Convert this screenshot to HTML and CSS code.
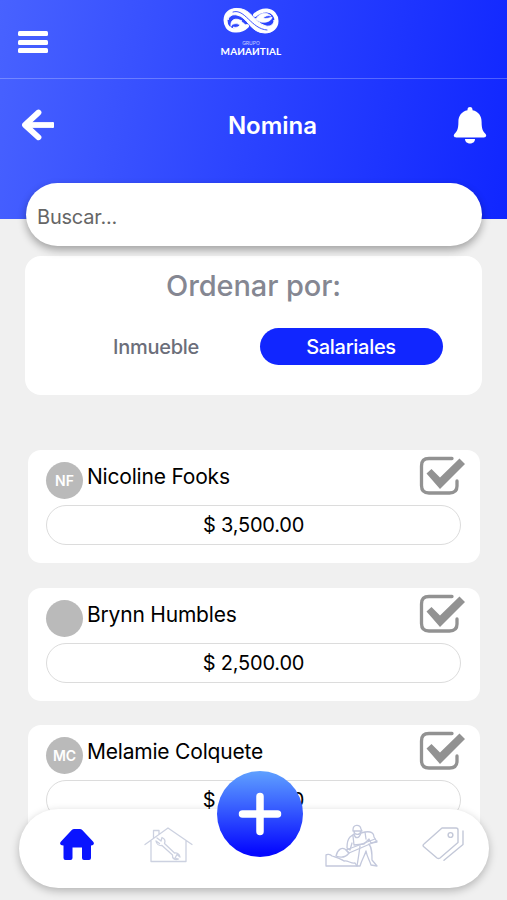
FILE: index.html
```
<!DOCTYPE html>
<html lang="es">
<head>
    <meta charset="UTF-8">
    <meta name="viewport" content="width=device-width, initial-scale=1.0">
    <title>Nomina</title>
    <link rel="stylesheet" href="styles.css">
</head>
<body>
    <header class="header">
      <div class="topbar">
        <button class="menu" aria-label="Menu"><span></span><span></span><span></span></button>
        <div class="logo">
          <svg width="56" height="28" viewBox="0 0 56 28" fill="none" stroke="#fff" stroke-linecap="round">
            <path stroke-width="4" d="M24 19C20 23 17 24 12 23.500C5 23 2.500 18 2.500 13C2.500 7 7 3 14 3M32 8C36 4.500 39 3 44 3.500C50 4 53.500 9 53.500 14C53.500 20 49 24 43 24"/>
            <path fill="#fff" stroke-width="1" d="M13 1.500C28 0 31 16 43 19C48 20 51 17 51 13C55 20 50 26 42 26C27 26 25 10 14 8C9 7 6 9 5 13C3 7 7 2 13 1.500Z"/>
            <path fill="#fff" stroke-width="0.800" d="M8 19C7 13 12 10 19 14C16 14 22 16 23 19C19 23 13 24 10 20C13 21 16 20 17 18C14 16 10 16 8 19ZM33 12C36 6 43 4 48 9C45 8 42 9 40 11C43 12 47 11 49 10C49 15 38 18 33 12Z"/>
            <path stroke="#2b43ff" stroke-width="0.900" d="M10 5C22 1 28 22 44 23"/>
          </svg>
          <span class="logo-small">GRUPO</span>
          <span class="logo-name">MAИAИTIAL</span>
        </div>
      </div>
      <div class="titlebar">
        <svg class="back" width="34" height="34" viewBox="0 0 34 34" fill="none" stroke="#fff" stroke-width="5.800" stroke-linejoin="round" stroke-linecap="round">
          <path d="M17.500 4.500L4 17L17.500 29.300"/>
          <path stroke-linecap="butt" d="M6 17H32"/>
          <path stroke-width="2" d="M32 15.100V18.900"/>
        </svg>
        <h1>Nomina</h1>
        <svg class="bell" width="34" height="38" viewBox="0 0 34 38" fill="#fff">
          <path d="M14.500 3.500C14.500 0.200 19.500 0.200 19.500 3.500V4.300C25.500 5.500 28.600 10 28.600 16C28.600 23 30 25.500 32.600 28C34 30 32.700 31.400 31 31.400H3C1.300 31.400 0 30 1.400 28C4 25.500 5.400 23 5.400 16C5.400 10 8.500 5.500 14.500 4.300Z"/>
          <path d="M12 33H22C22 39 12 39 12 33Z"/>
        </svg>
      </div>
    </header>

    <main>
      <input class="search" type="text" placeholder="Buscar...">
      <section class="sort">
        <h2>Ordenar por:</h2>
        <div class="options">
          <button class="option">Inmueble</button>
          <button class="option active">Salariales</button>
        </div>
      </section>

      <section class="list">
        <article class="card">
          <div class="person">
            <span class="avatar">NF</span>
            <span class="name">Nicoline Fooks</span>
            <svg class="check" width="46" height="40" viewBox="0 0 46 40"><use href="#check"/></svg>
          </div>
          <div class="amount">$ 3,500.00</div>
        </article>
        <article class="card">
          <div class="person">
            <span class="avatar"></span>
            <span class="name">Brynn Humbles</span>
            <svg class="check" width="46" height="40" viewBox="0 0 46 40"><use href="#check"/></svg>
          </div>
          <div class="amount">$ 2,500.00</div>
        </article>
        <article class="card">
          <div class="person">
            <span class="avatar">MC</span>
            <span class="name">Melamie Colquete</span>
            <svg class="check" width="46" height="40" viewBox="0 0 46 40"><use href="#check"/></svg>
          </div>
          <div class="amount">$ 2,500.00</div>
        </article>
      </section>
    </main>

    <nav class="nav">
      <svg class="home" width="34" height="31" viewBox="0 0 34 31" fill="#0a14ff">
        <path d="M12 0.800Q13 0 14 0H20Q21 0 22 0.800L33 12.500Q34.500 14 33.500 15.500Q32.500 16.500 31 16.500V29Q31 31 29 31H24Q22 31 22 29V18.500H12.500V29Q12.500 31 10.500 31H5.500Q3.500 31 3.500 29V16.500Q1.500 16.500 0.500 15.500Q-0.500 14 1 12.500Z"/>
      </svg>
      <svg class="repair" width="49" height="36" viewBox="0 0 49 36" fill="none" stroke="#ccd1e0" stroke-width="1.300" stroke-linecap="round" stroke-linejoin="round">
        <path d="M1 17.500L24 1L48 17.500M7 14V34.500H42V14M9.500 11V3.500H15V7"/>
        <path d="M13 11L17 14L18 10.500C21.500 12 21.500 14 20.500 16.500L30.500 26C33 25.500 35.500 27 36 30L33 27.500L31 31L34.500 32C31 33.500 28 31.500 28.500 28L18 18.500C15 19 12.500 17 12 14L15.500 16.500"/>
      </svg>
      <button class="add" aria-label="Agregar">
        <svg width="44" height="44" viewBox="0 0 44 44" stroke="#fff" stroke-width="7.500" stroke-linecap="round">
          <path d="M22 4.500V39.500M4.500 22H39.500"/>
        </svg>
      </button>
      <svg class="worker" width="54" height="44" viewBox="0 0 54 44" fill="none" stroke="#c3c8dc" stroke-width="1.300" stroke-linecap="round" stroke-linejoin="round">
        <path d="M28 6C28 0 35 0 36 5L37 7H28ZM29 7C29 11 35 12 36 7"/>
        <path d="M29 10L25 13C22 16 22 20 22 24L25 26L27 19M36 9L40 8C46 7 49 9 49 13L52 18L46 19L44 15L39 20M29 10C30 15 34 15 36 9M28 12L29 21L39 20M40 8L41 15"/>
        <path d="M52 17L24 29L21 26L50 15"/>
        <path d="M23 28C17 20 12 27 11 32C16 34 21 33 24 29"/>
        <path d="M1 31V42H32L30 39C26 40 23 36 19 37C15 34 10 33 7 32C5 30 2 30 1 31"/>
        <path d="M35 22C34 30 33 36 32 42H35C37 35 40 31 41 27C42 33 45 37 46 41L52 42L47 36C47 29 47 24 44 20"/>
      </svg>
      <svg class="tags" width="42" height="34" viewBox="0 0 42 34" fill="none" stroke="#c3c8d8" stroke-width="1.400" stroke-linecap="round" stroke-linejoin="round">
        <path d="M20 1H34Q36 1 36 3V15.500L18 31Q16.500 32 15 31L1.500 19.500Q0.500 18 2 17Z"/>
        <circle cx="28.500" cy="8" r="2.400"/>
        <path d="M41 4V17.500L22 33.300"/>
      </svg>
    </nav>

    <svg class="sprite" width="0" height="0">
      <symbol id="check" viewBox="0 0 46 40">
        <path fill="none" stroke="#929292" stroke-width="3.300" stroke-linecap="round" d="M33 2.500H10Q2.500 2.500 2.500 10V29.500Q2.500 37 10 37H30.500Q38 37 38 30V25"/>
        <path fill="#929292" d="M7.500 17.500L12.500 13L21 21.500L40.500 2.500L46 8L21 33Z"/>
      </symbol>
    </svg>
</body>
</html>
```

FILE: styles.css
```
* {
    margin: 0;
    padding: 0;
    box-sizing: border-box;
}
body {
    height: 100vh;
    overflow: hidden;
    background: #f0f0f0;
    font-family: Inter, 'Liberation Sans', sans-serif;
}
button {
    border: none;
    background: none;
    font-family: inherit;
    cursor: pointer;
}
.header {
    height: 219px;
    background: linear-gradient(100deg, #4862ff 0%, #2b43ff 50%, #1026ff 100%);
}
.topbar {
    height: 79px;
    display: grid;
    grid-template-columns: 1fr auto 1fr;
    padding: 0 23px 0 18px;
    border-bottom: 1px solid rgba(255, 255, 255, 0.25);
}
.menu {
    width: 30px;
    height: 22px;
    margin-top: 31px;
    display: flex;
    flex-direction: column;
    justify-content: space-between;
}
.menu span {
    width: 30px;
    height: 5px;
    border-radius: 1.5px;
    background: white;
}
.logo {
    display: flex;
    flex-direction: column;
    align-items: center;
    padding-top: 7px;
    color: white;
}
.logo-small {
    margin-top: 5px;
    font-size: 5px;
    line-height: 6px;
    opacity: 0.7;
}
.logo-name {
    font-family: Lato, sans-serif;
    font-size: 10px;
    font-weight: bold;
    line-height: 11px;
    letter-spacing: 0.1px;
}
.titlebar {
    display: flex;
    justify-content: space-between;
    align-items: center;
    height: 93px;
    padding: 0 20px 0 21px;
}
.titlebar h1 {
    margin-left: 37px;
    color: white;
    font-size: 24px;
    font-weight: 600;
}
.back,
.bell {
    margin-bottom: 2px;
}
main {
    padding: 0 25px;
    margin-top: -36px;
}
.search {
    display: block;
    position: relative;
    width: 456px;
    height: 63px;
    margin-left: 1px;
    padding: 4px 11px 0;
    border: none;
    border-radius: 32px;
    background: white;
    box-shadow: 0 4px 8px rgba(0, 0, 0, 0.33);
    font-family: inherit;
    font-size: 20px;
    letter-spacing: -0.2px;
}
.search::placeholder {
    color: #666;
}
.sort {
    height: 139px;
    margin-top: 10px;
    border-radius: 16px;
    background: white;
    text-align: center;
}
.sort h2 {
    padding-top: 12px;
    color: #858792;
    font-size: 29px;
    font-weight: 500;
    line-height: 36px;
    letter-spacing: -0.1px;
}
.options {
    display: flex;
    gap: 12px;
    justify-content: center;
    margin-top: 24px;
}
.option {
    width: 183px;
    height: 37px;
    border-radius: 19px;
    color: #6b6e7a;
    font-size: 20px;
    font-weight: 500;
    letter-spacing: -0.3px;
}
.option.active {
    background: #1126ff;
    color: white;
}
.list {
    display: flex;
    flex-direction: column;
    gap: 24.5px;
    margin-top: 55px;
    padding: 0 2px 0 3px;
}
.card {
    height: 113px;
    flex-shrink: 0;
    padding: 6px 19px 0 18px;
    border-radius: 13px;
    background: white;
}
.person {
    display: flex;
    height: 49px;
    margin-right: -4px;
}
.avatar {
    display: flex;
    align-items: center;
    justify-content: center;
    width: 37px;
    height: 37px;
    margin-top: 6px;
    border-radius: 50%;
    background: #bababa;
    color: white;
    font-size: 14px;
    font-weight: 600;
}
.name {
    margin-left: 4px;
    font-size: 21px;
    line-height: 41px;
    letter-spacing: -0.2px;
}
.check {
    margin-left: auto;
}
.amount {
    height: 40px;
    border: 1.5px solid #dcdcdc;
    border-radius: 20px;
    font-size: 20px;
    line-height: 39px;
    letter-spacing: -0.2px;
    text-align: center;
}
.nav {
    position: fixed;
    left: 19px;
    bottom: 12px;
    width: 470px;
    height: 79px;
    display: flex;
    align-items: flex-start;
    padding: 15px 24px 0 41px;
    border-radius: 40px;
    background: white;
    box-shadow: 0 3px 8px rgba(0, 0, 0, 0.25);
}
.home {
    margin-top: 5px;
}
.repair {
    margin: 3px 0 0 50px;
}
.add {
    display: flex;
    align-items: center;
    justify-content: center;
    width: 86px;
    height: 86px;
    margin: -53px 0 0 24px;
    border-radius: 50%;
    background: linear-gradient(#5fa0ff, #3a62ff 40%, #0508ff 95%);
}
.worker {
    margin-left: 22px;
}
.tags {
    margin: 3px 0 0 43px;
}
.sprite {
    position: absolute;
}
```
